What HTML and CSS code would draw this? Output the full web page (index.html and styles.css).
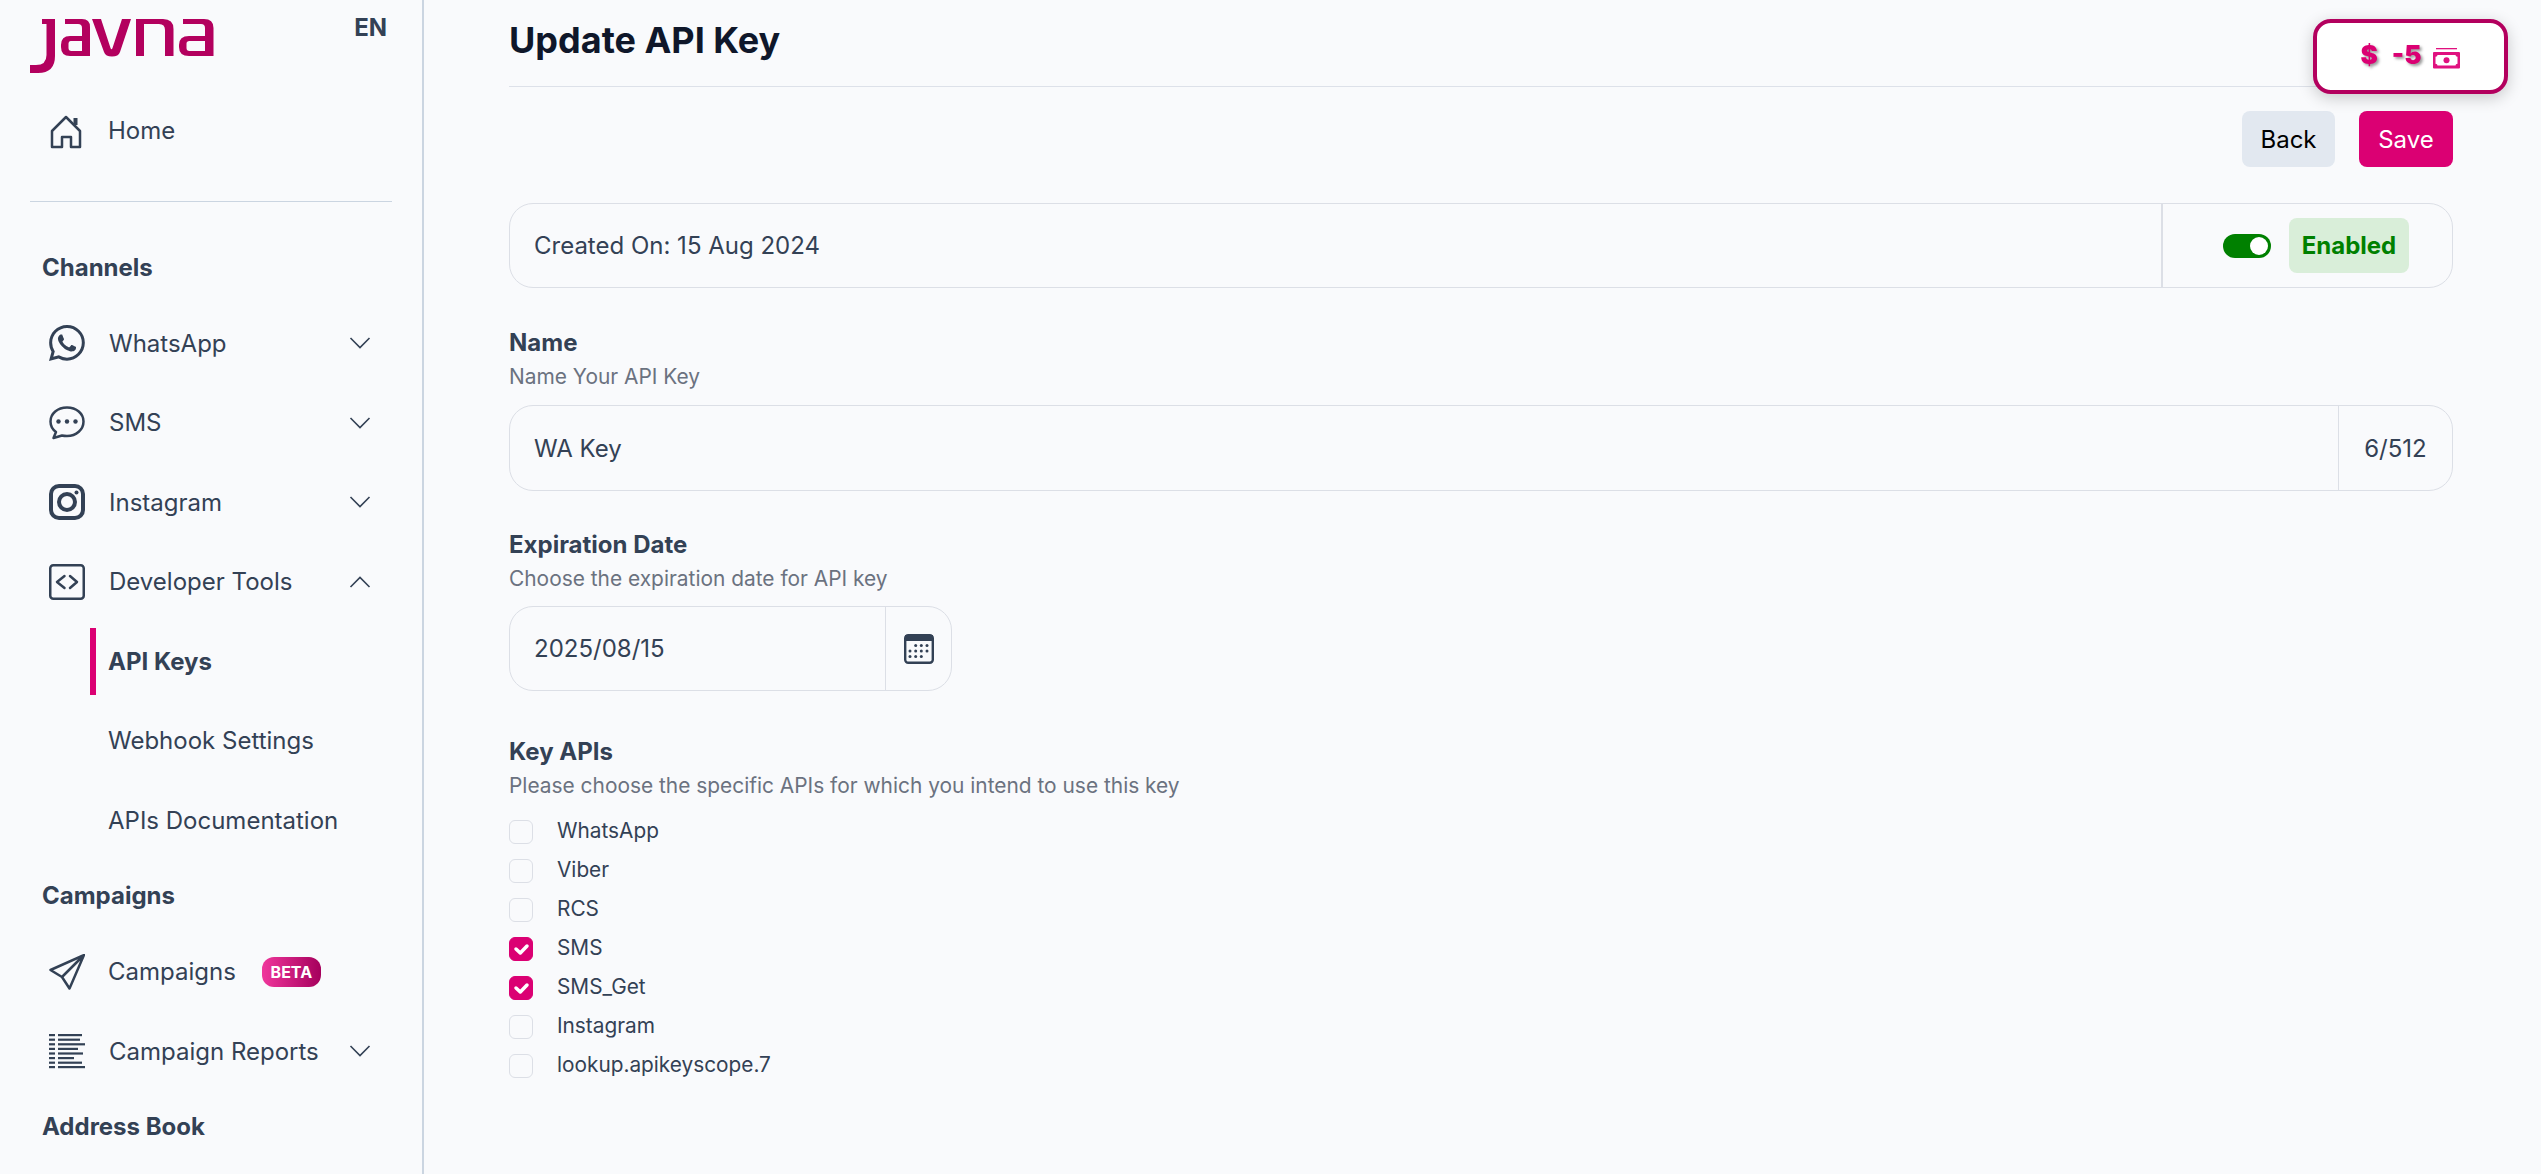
FILE: index.html
```html
<!DOCTYPE html>
<html lang="en">
<head>
<meta charset="utf-8">
<title>Update API Key</title>
<link rel="stylesheet" href="styles.css">
</head>
<body>
<div class="app">
  <aside class="sidebar">
    <div class="brand">
      <svg class="logo" viewBox="0 0 200 70" width="200" height="70" role="img" aria-label="javna">
        <path d="M22 9H35V46Q35 63 18 63H10V55H16Q26.500 55 26.500 45V14H22Z"/>
        <path fill-rule="evenodd" d="M45 9H62Q70 9 70 17V46H50Q41 46 41 37V35Q41 26 50 26H62V18Q62 14 58 14H45ZM50.500 31Q48.500 31 48.500 33.500V38Q48.500 41 51.500 41H62V31Z"/>
        <path d="M72 9H81L90.500 38Q91.500 40.500 92.500 38L102 9H111L100 42Q98.500 46.500 92 46.500Q85.500 46.500 84 42Z"/>
        <path d="M116 9H143Q153.500 9 153.500 19V46H145V20Q145 14 139 14H124V46H116Z"/>
        <path fill-rule="evenodd" d="M163 9H184Q193.500 9 193.500 18V46H169Q159 46 159 37V35Q159 26 169 26H185V18Q185 14 181 14H163ZM169.500 31Q166.500 31 166.500 33.500V38Q166.500 41 169.500 41H185V31Z"/>
      </svg>
      <span class="lang">EN</span>
    </div>
    <a class="row home-row">
      <svg class="ico" viewBox="0 0 36 36"><path d="M3 34V18L17 4L31 18V34H22V24H13V34Z"/><rect class="solid" x="24.500" y="5" width="4" height="7"/></svg>
      <span class="label">Home</span>
    </a>
    <div class="rule"></div>
    <h2 class="section first">Channels</h2>
    <nav class="nav">
      <a class="row">
        <svg class="ico" viewBox="0 0 16 16"><path class="solid" d="M13.601 2.326A7.854 7.854 0 0 0 7.994 0C3.627 0 .068 3.558.064 7.926c0 1.399.366 2.76 1.057 3.965L0 16l4.204-1.102a7.933 7.933 0 0 0 3.79.965h.004c4.368 0 7.926-3.558 7.93-7.93A7.898 7.898 0 0 0 13.6 2.326zM7.994 14.521a6.573 6.573 0 0 1-3.356-.92l-.24-.144-2.494.654.666-2.433-.156-.251a6.56 6.56 0 0 1-1.007-3.505c0-3.626 2.957-6.584 6.591-6.584a6.56 6.56 0 0 1 4.66 1.931 6.557 6.557 0 0 1 1.928 4.66c-.004 3.639-2.961 6.592-6.592 6.592zm3.615-4.934c-.197-.099-1.17-.578-1.353-.646-.182-.065-.315-.099-.445.099-.133.197-.513.646-.627.775-.114.133-.232.148-.43.05-.197-.1-.836-.308-1.592-.985-.59-.525-.985-1.175-1.103-1.372-.114-.198-.011-.304.088-.403.087-.088.197-.232.296-.346.1-.114.133-.198.198-.33.065-.134.034-.248-.015-.347-.05-.099-.445-1.076-.612-1.47-.16-.389-.323-.335-.445-.34-.114-.007-.247-.007-.38-.007a.729.729 0 0 0-.529.247c-.182.198-.691.677-.691 1.654 0 .977.71 1.916.81 2.049.098.133 1.394 2.132 3.383 2.992.47.205.84.326 1.129.418.475.152.904.129 1.246.08.38-.058 1.171-.48 1.338-.943.164-.464.164-.86.114-.943-.049-.084-.182-.133-.38-.232z"/></svg>
        <span class="label">WhatsApp</span>
        <svg class="chev" viewBox="0 0 22 12"><polyline points="1.500,1 11,10.500 20.500,1"/></svg>
      </a>
      <a class="row">
        <svg class="ico" viewBox="0 0 36 36"><path d="M18 2.500C8.600 2.500 1.500 8.500 1.500 16.500C1.500 21 3.500 24.500 7 27L4.500 33L13 30.500C14.600 30.900 16.300 31 18 31C27.400 31 34.500 24.500 34.500 16.500C34.500 8.500 27.400 2.500 18 2.500Z"/><circle class="solid" cx="9.500" cy="16.500" r="2.200"/><circle class="solid" cx="18" cy="16.500" r="2.200"/><circle class="solid" cx="26.500" cy="16.500" r="2.200"/></svg>
        <span class="label">SMS</span>
        <svg class="chev" viewBox="0 0 22 12"><polyline points="1.500,1 11,10.500 20.500,1"/></svg>
      </a>
      <a class="row">
        <svg class="ico ico-bold" viewBox="0 0 36 36"><rect x="2" y="2" width="32" height="32" rx="8"/><circle cx="18" cy="18" r="8"/><circle class="solid" cx="27.500" cy="8.500" r="2"/></svg>
        <span class="label">Instagram</span>
        <svg class="chev" viewBox="0 0 22 12"><polyline points="1.500,1 11,10.500 20.500,1"/></svg>
      </a>
      <a class="row">
        <svg class="ico" viewBox="0 0 36 36"><rect x="1.250" y="1.250" width="33.500" height="33.500" rx="3"/><polyline points="15.500,12 8,18 15.500,24"/><polyline points="21,12 28,18 21,24"/></svg>
        <span class="label">Developer Tools</span>
        <svg class="chev" viewBox="0 0 22 12"><polyline points="1.500,11 11,1.500 20.500,11"/></svg>
      </a>
      <a class="row sub active"><span class="label">API Keys</span></a>
      <a class="row sub"><span class="label">Webhook Settings</span></a>
      <a class="row sub"><span class="label">APIs Documentation</span></a>
    </nav>
    <h2 class="section">Campaigns</h2>
    <nav class="nav">
      <a class="row">
        <svg class="ico" viewBox="0 0 36 36"><path d="M35 1L1.500 16L13 23L20.500 34.500ZM35 1L13 23"/></svg>
        <span class="label">Campaigns</span>
        <span class="beta">BETA</span>
      </a>
      <a class="row">
        <svg class="ico ico-list" viewBox="0 0 36 36">
          <rect x="0" y="1" width="6" height="2.200"/><rect x="9" y="1" width="24" height="2.200"/>
          <rect x="0" y="5.600" width="6" height="2.200"/><rect x="9" y="5.600" width="22" height="2.200"/>
          <rect x="0" y="10.200" width="6" height="2.200"/><rect x="9" y="10.200" width="27" height="2.200"/>
          <rect x="0" y="14.800" width="6" height="2.200"/><rect x="9" y="14.800" width="20" height="2.200"/>
          <rect x="0" y="19.400" width="6" height="2.200"/><rect x="9" y="19.400" width="25" height="2.200"/>
          <rect x="0" y="24" width="6" height="2.200"/><rect x="9" y="24" width="16" height="2.200"/>
          <rect x="0" y="28.600" width="6" height="2.200"/><rect x="9" y="28.600" width="24" height="2.200"/>
          <rect x="0" y="33" width="6" height="2.200"/><rect x="9" y="33" width="27" height="2.200"/>
        </svg>
        <span class="label">Campaign Reports</span>
        <svg class="chev" viewBox="0 0 22 12"><polyline points="1.500,1 11,10.500 20.500,1"/></svg>
      </a>
    </nav>
    <h2 class="section">Address Book</h2>
  </aside>

  <main class="main">
    <header class="head"><h1>Update API Key</h1></header>
    <div class="actions">
      <button class="btn btn-back">Back</button>
      <button class="btn btn-save">Save</button>
    </div>

    <div class="box status-box">
      <div class="box-main">Created On: 15 Aug 2024</div>
      <div class="box-side status-side">
        <span class="toggle"></span>
        <span class="pill">Enabled</span>
      </div>
    </div>

    <section class="field field-name">
      <h3>Name</h3>
      <p class="hint">Name Your API Key</p>
      <div class="box">
        <div class="box-main">WA Key</div>
        <div class="box-side count">6/512</div>
      </div>
    </section>

    <section class="field field-date">
      <h3>Expiration Date</h3>
      <p class="hint">Choose the expiration date for API key</p>
      <div class="box date-box">
        <div class="box-main">2025/08/15</div>
        <div class="box-side cal">
          <svg viewBox="0 0 30 30" width="30" height="30">
            <rect class="cal-frame" x="1.200" y="1.200" width="27.600" height="27.600" rx="3"/>
            <rect class="cal-top" x="1" y="1" width="28" height="6"/>
            <g class="cal-dots">
              <circle cx="11.700" cy="11.500" r="1.500"/><circle cx="17.300" cy="11.500" r="1.500"/><circle cx="23" cy="11.500" r="1.500"/>
              <circle cx="6" cy="17" r="1.500"/><circle cx="11.700" cy="17" r="1.500"/><circle cx="17.300" cy="17" r="1.500"/><circle cx="23" cy="17" r="1.500"/>
              <circle cx="6" cy="22.500" r="1.500"/><circle cx="11.700" cy="22.500" r="1.500"/><circle cx="17.300" cy="22.500" r="1.500"/>
            </g>
          </svg>
        </div>
      </div>
    </section>

    <section class="field field-apis">
      <h3>Key APIs</h3>
      <p class="hint">Please choose the specific APIs for which you intend to use this key</p>
      <ul class="checks">
        <li><span class="cb"></span>WhatsApp</li>
        <li><span class="cb"></span>Viber</li>
        <li><span class="cb"></span>RCS</li>
        <li><span class="cb on"><svg viewBox="0 0 24 24" width="24" height="24"><polyline points="7,12 11.300,16 18,9"/></svg></span>SMS</li>
        <li><span class="cb on"><svg viewBox="0 0 24 24" width="24" height="24"><polyline points="7,12 11.300,16 18,9"/></svg></span>SMS_Get</li>
        <li><span class="cb"></span>Instagram</li>
        <li><span class="cb"></span>lookup.apikeyscope.7</li>
      </ul>
    </section>
  </main>
</div>

<div class="balance">
  <span class="bal-txt">$</span>
  <span class="bal-txt">-5</span>
  <svg class="bal-ico" viewBox="0 0 27 21" width="27" height="21">
    <rect x="3" y="0" width="21" height="1.300"/>
    <path fill-rule="evenodd" d="M1 4H26Q27 4 27 5V19.500Q27 20.500 26 20.500H1Q0 20.500 0 19.500V5Q0 4 1 4ZM4.500 7Q4.500 8.800 2.500 8.800V15.700Q4.500 15.700 4.500 17.500H22.500Q22.500 15.700 24.500 15.700V8.800Q22.500 8.800 22.500 7Z"/>
    <circle cx="13.500" cy="12.300" r="3"/>
  </svg>
</div>
</body>
</html>
```

FILE: styles.css
```css
* { box-sizing: border-box; }
html, body { margin: 0; padding: 0; height: 100%; overflow: hidden; }
body {
  font-family: Inter, "Liberation Sans", sans-serif;
  background: #f9fafc;
  color: #334155;
  font-size: 24px;
}
.app { display: flex; height: 1174px; }

/* Sidebar */
.sidebar {
  width: 424px;
  flex: none;
  padding: 0 30px;
  border-right: 2px solid #cbd5e1;
  overflow: hidden;
}
.brand {
  display: flex;
  justify-content: space-between;
  height: 97px;
  padding-top: 10px;
  margin-left: -10px;
  margin-right: 5px;
}
.logo { fill: #b3005e; display: block; }
.lang { font-weight: 700; font-size: 24px; line-height: 35px; color: #334155; }
.row {
  display: flex;
  align-items: center;
  height: 67px;
  padding-left: 19px;
  padding-right: 21px;
  color: #334155;
}
.ico {
  width: 36px;
  height: 36px;
  flex: none;
  fill: none;
  stroke: #334155;
  stroke-width: 2.500;
  stroke-linejoin: round;
  stroke-linecap: round;
  margin-right: 23px;
}
.row:has(.chev) .ico { margin-right: 24px; }
.ico .solid { fill: #334155; stroke: none; }
.ico-bold { stroke-width: 4; }
.ico-list { fill: #334155; stroke: none; }
.label { white-space: nowrap; }
.chev {
  width: 22px;
  height: 12px;
  margin-left: auto;
  fill: none;
  stroke: #334155;
  stroke-width: 1.600;
}
.rule { height: 1px; background: #cbd5e1; margin-top: 37px; }
.section {
  margin: 24px 0 24px 12px;
  font-size: 24px;
  line-height: 36px;
  font-weight: 700;
  color: #334155;
}
.section.first { margin-top: 47.500px; }
.nav { display: flex; flex-direction: column; gap: 12.600px; }
.row.sub {
  margin-left: 60px;
  padding-left: 12px;
  border-left: 6px solid transparent;
}
.row.sub.active { border-left-color: #db0073; font-weight: 700; }
.beta {
  margin-left: 26px;
  width: 59px;
  height: 30px;
  border-radius: 12px;
  background: linear-gradient(90deg, #f0379c, #a5005c);
  color: #fff;
  font-size: 16px;
  font-weight: 700;
  line-height: 30px;
  text-align: center;
}

/* Main */
.main { flex: 1; min-width: 0; padding: 0 88px 0 85px; }
.head { height: 87px; border-bottom: 1px solid #dde1e9; }
.head h1 {
  margin: 0;
  font-size: 36px;
  line-height: 80px;
  font-weight: 700;
  color: #0f172a;
}
.actions { display: flex; justify-content: flex-end; gap: 24px; margin-top: 24px; }
.btn {
  height: 56px;
  border: 0;
  border-radius: 8px;
  font: inherit;
  padding: 0;
}
.btn-back { width: 93px; background: #e2e8f0; color: #000; }
.btn-save { width: 94px; background: #db0073; color: #fff; }

.box {
  display: flex;
  height: 86px;
  border: 1px solid #dcdfe6;
  border-radius: 24px;
  align-items: stretch;
}
.box-main { flex: 1; display: flex; align-items: center; padding-left: 24px; }
.box-side { display: flex; align-items: center; justify-content: center; border-left: 1px solid #dcdfe6; }
.status-box { margin-top: 36px; height: 85px; }
.status-side { width: 291px; border-left-width: 2px; justify-content: flex-start; padding-left: 60px; gap: 18px; }
.toggle {
  position: relative;
  width: 48px;
  height: 24px;
  border-radius: 12px;
  background: #008000;
}
.toggle::after {
  content: "";
  position: absolute;
  right: 3px;
  top: 3px;
  width: 18px;
  height: 18px;
  border-radius: 50%;
  background: #fff;
}
.pill {
  width: 120px;
  height: 55px;
  border-radius: 8px;
  background: #d9eed9;
  color: #008000;
  font-weight: 700;
  line-height: 55px;
  text-align: center;
}
.field h3 { margin: 0; font-size: 24px; line-height: 36px; font-weight: 700; color: #334155; }
.hint { margin: 2px 0 0; font-size: 20.900px; line-height: 28px; color: #6b7280; }
.field-name { margin-top: 37px; }
.field-name .box { margin-top: 14px; }
.count { width: 114px; }
.field-date { margin-top: 36px; }
.date-box { margin-top: 13px; width: 443px; height: 85px; }
.cal { width: 66px; }
.cal-frame { fill: none; stroke: #334155; stroke-width: 2.400; }
.cal-top, .cal-dots { fill: #334155; }
.field-apis { margin-top: 43px; }
.checks {
  list-style: none;
  margin: 19px 0 0;
  padding: 0;
  display: flex;
  flex-direction: column;
  gap: 15px;
}
.checks li {
  display: flex;
  align-items: center;
  height: 24px;
  font-size: 20.800px;
  line-height: 20px;
  gap: 24px;
}
.cb {
  width: 24px;
  height: 24px;
  flex: none;
  border: 1px solid #dcdfe6;
  border-radius: 6px;
  position: relative;
  top: 1px;
}
.cb.on { background: #db0073; border-color: #db0073; }
.cb svg {
  display: block;
  margin: -1px;
  fill: none;
  stroke: #fff;
  stroke-width: 3.500;
  stroke-linecap: round;
  stroke-linejoin: round;
}

/* Floating balance card */
.balance {
  position: fixed;
  left: 2313px;
  top: 19px;
  width: 195px;
  height: 75px;
  background: #fff;
  border: 4px solid #b3005e;
  border-radius: 18px;
  box-shadow: 0 4px 16px rgba(0, 0, 0, .2);
  display: flex;
  align-items: center;
  justify-content: center;
  gap: 14px;
}
.bal-txt {
  position: relative;
  top: -2px;
  font-size: 26px;
  font-weight: 900;
  color: #db0073;
  text-shadow: 2px 2px 3px rgba(0, 0, 0, .4);
}
.bal-ico { fill: #e0117f; margin: 4px 0 0 -2px; }
```
